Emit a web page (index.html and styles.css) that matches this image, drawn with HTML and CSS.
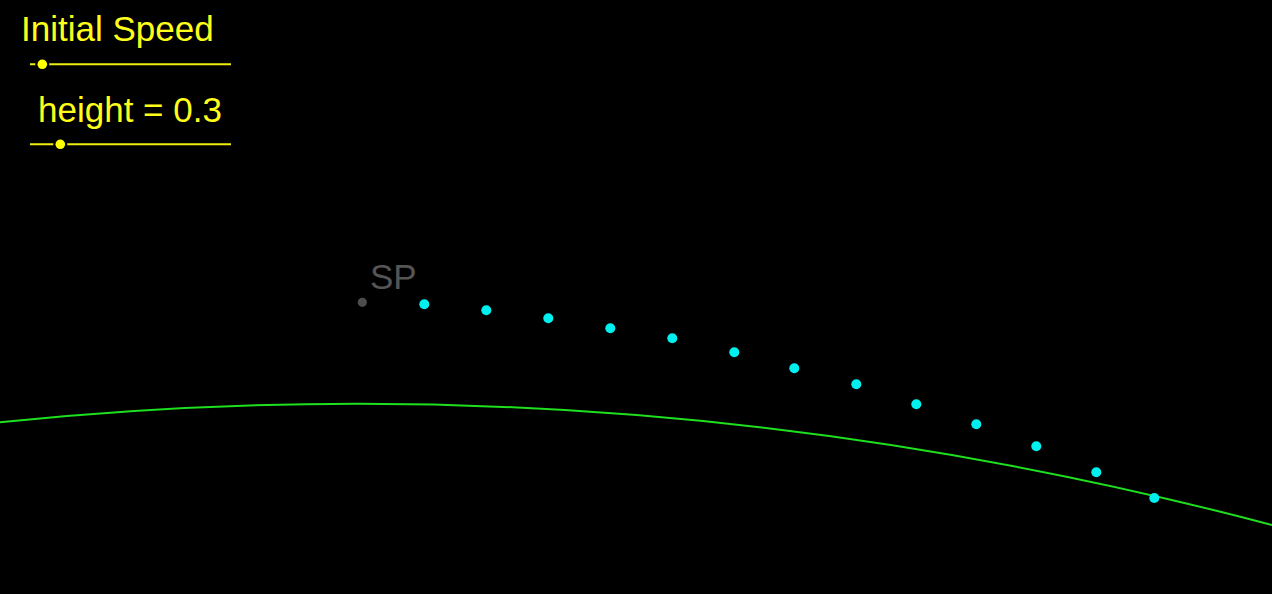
FILE: index.html
```html
<!DOCTYPE html>
<html lang="en">
<head>
<meta charset="utf-8">
<title>Projectile</title>
<link rel="stylesheet" href="styles.css">
</head>
<body>
<main class="board">
  <svg class="plot" width="1272" height="594" viewBox="0 0 1272 594" xmlns="http://www.w3.org/2000/svg">
    <path class="curve" d="M0 422.3 Q636 356.5 1272 525"/>

    <g class="slider">
      <text class="label" x="21" y="41">Initial Speed</text>
      <line class="track" x1="30" y1="64.3" x2="231" y2="64.3"/>
      <circle class="knob-ring" cx="42.3" cy="64.3" r="7"/>
      <circle class="knob" cx="42.3" cy="64.3" r="4.8"/>
    </g>

    <g class="slider">
      <text class="label" x="38" y="121.7">height = 0.3</text>
      <line class="track" x1="30" y1="144.3" x2="231" y2="144.3"/>
      <circle class="knob-ring" cx="60.3" cy="144.3" r="7"/>
      <circle class="knob" cx="60.3" cy="144.3" r="4.8"/>
    </g>

    <g class="start">
      <text class="sp-label" x="370" y="288.5">SP</text>
      <circle class="sp" cx="362.3" cy="302.3" r="4.6"/>
    </g>

    <g class="trail">
      <circle cx="424.3" cy="304.3" r="5"/>
      <circle cx="486.3" cy="310.3" r="5"/>
      <circle cx="548.3" cy="318.3" r="5"/>
      <circle cx="610.3" cy="328.3" r="5"/>
      <circle cx="672.3" cy="338.3" r="5"/>
      <circle cx="734.3" cy="352.3" r="5"/>
      <circle cx="794.3" cy="368.3" r="5"/>
      <circle cx="856.3" cy="384.3" r="5"/>
      <circle cx="916.3" cy="404.3" r="5"/>
      <circle cx="976.3" cy="424.3" r="5"/>
      <circle cx="1036.3" cy="446.3" r="5"/>
      <circle cx="1096.3" cy="472.3" r="5"/>
      <circle cx="1154.3" cy="498" r="5"/>
    </g>
  </svg>
</main>
</body>
</html>
```
FILE: styles.css
```css
html, body {
  margin: 0;
  padding: 0;
  background: #000;
  overflow: hidden;
}

.board {
  width: 1272px;
  height: 594px;
  background: #000;
}

.plot {
  display: block;
}

.curve {
  fill: none;
  stroke: #1ee01e;
  stroke-width: 2;
}

.label {
  font-family: "Liberation Sans", Arial, sans-serif;
  font-size: 35px;
  fill: #ffff1a;
}

.track {
  stroke: #eeee11;
  stroke-width: 2;
}

.knob-ring {
  fill: #000;
}

.knob {
  fill: #ffff00;
}

.sp-label {
  font-family: "Liberation Sans", Arial, sans-serif;
  font-size: 35px;
  fill: #555555;
}

.sp {
  fill: #4d4d4d;
}

.trail circle {
  fill: #00f0f0;
}
```
